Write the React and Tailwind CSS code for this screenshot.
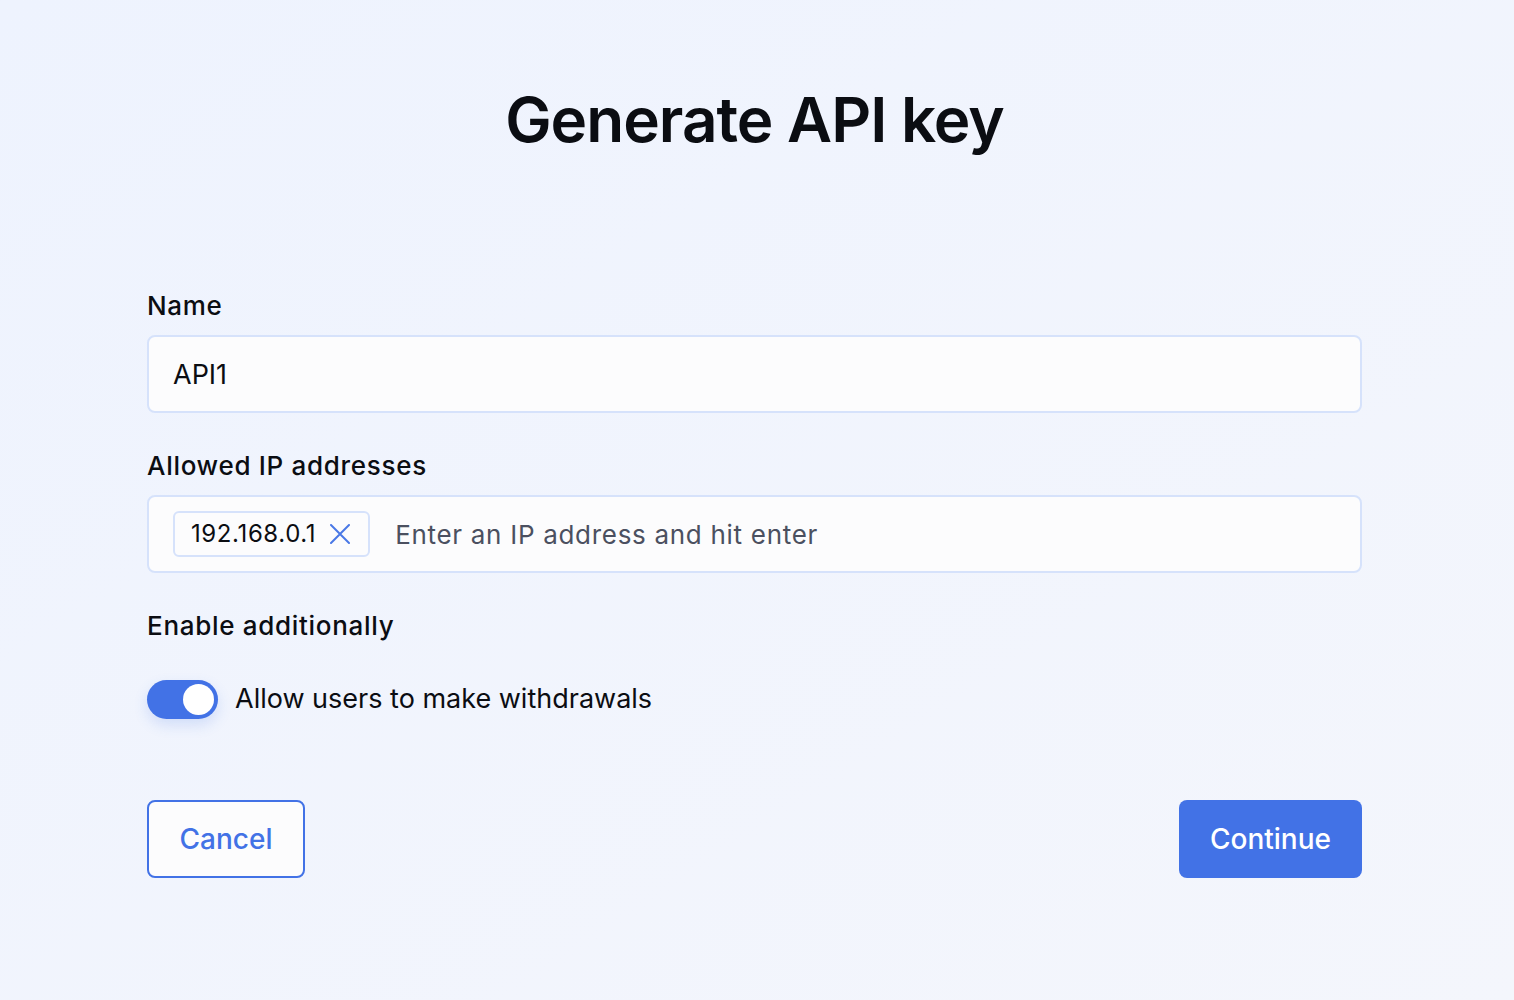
import React, { useState } from 'react';

function Chip({ label, onRemove }) {
    return (
        <span className="flex items-center gap-[14px] h-[46px] pl-[16px] pr-[18px] rounded-[6px] border-2 border-[#d6e2fb] bg-[#fcfcfd] text-[24px] tracking-[0.6px] text-[#0b0d12]">
            {label}
            <button onClick={onRemove} className="text-[#4a78e6]">
                <svg width="20" height="20" viewBox="0 0 20 20" fill="none" stroke="currentColor" strokeWidth="2" strokeLinecap="round">
                    <path d="M1 1L19 19M19 1L1 19" />
                </svg>
            </button>
        </span>
    );
}

export default function App() {
    const [enabled, setEnabled] = useState(true);
    const [ips, setIps] = useState(['192.168.0.1']);

    return (
        <div
            className="min-h-[1000px] bg-gradient-to-br from-[#eef3fe] to-[#f4f6fc] text-[#0b0d12]"
            style={{ fontFamily: 'Inter, "Noto Sans", sans-serif' }}
        >
            <div className="pl-[147px] pr-[152px] pt-[80px]">
                <h1 className="text-center text-[62px] leading-[80px] font-semibold tracking-[-1px]">
                    Generate API key
                </h1>

                <div className="mt-[130px] flex flex-col">
                    <label className="text-[26px] leading-[32px] font-medium tracking-[0.7px] mb-[13px]">Name</label>
                    <input
                        defaultValue="API1"
                        className="h-[78px] px-[24px] rounded-[8px] border-2 border-[#d6e2fb] bg-[#fcfcfd] text-[27px] outline-none"
                    />

                    <label className="mt-[37px] text-[26px] leading-[32px] font-medium tracking-[0.7px] mb-[13px]">Allowed IP addresses</label>
                    <div className="h-[78px] px-[24px] rounded-[8px] border-2 border-[#d6e2fb] bg-[#fcfcfd] flex items-center gap-[25px]">
                        {ips.map(ip => (
                            <Chip key={ip} label={ip} onRemove={() => setIps(ips.filter(i => i !== ip))} />
                        ))}
                        <input
                            placeholder="Enter an IP address and hit enter"
                            className="flex-1 bg-transparent text-[26px] tracking-[0.7px] outline-none placeholder:text-[#4b5060]"
                        />
                    </div>

                    <div className="mt-[37px] text-[26px] leading-[32px] font-medium tracking-[0.7px]">Enable additionally</div>

                    <div className="mt-[37px] flex items-center gap-[17px]">
                        <button
                            onClick={() => setEnabled(!enabled)}
                            className={`relative w-[71px] h-[39px] rounded-full shadow-[0_6px_14px_rgba(66,114,230,0.18)] ${enabled ? 'bg-[#4272e6]' : 'bg-gray-300'}`}
                        >
                            <span className={`absolute top-[4px] w-[31px] h-[31px] rounded-full bg-white ${enabled ? 'left-[36px]' : 'left-[4px]'}`}></span>
                        </button>
                        <span className="text-[27px]">Allow users to make withdrawals</span>
                    </div>

                    <div className="mt-[80px] flex justify-between">
                        <button className="w-[158px] h-[78px] rounded-[8px] border-2 border-[#4272e6] bg-[#fcfcfd] text-[#4272e6] text-[28px] font-medium">
                            Cancel
                        </button>
                        <button className="w-[183px] h-[78px] rounded-[8px] bg-[#4272e6] text-white text-[28px] font-medium">
                            Continue
                        </button>
                    </div>
                </div>
            </div>
        </div>
    );
}
